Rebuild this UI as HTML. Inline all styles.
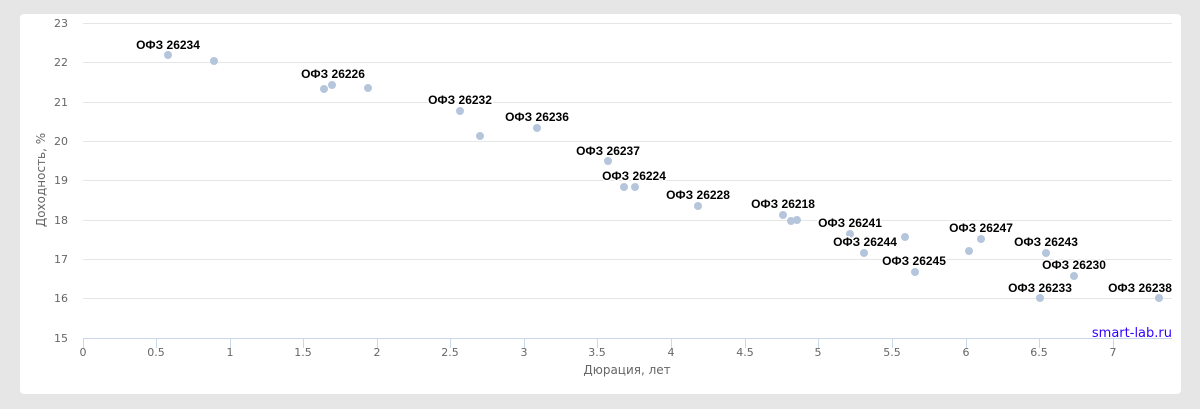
<!DOCTYPE html>
<html><head><meta charset="utf-8"><style>
body{margin:0;background:#e6e6e6;width:1200px;height:409px;overflow:hidden;font-family:"Liberation Sans",sans-serif}
.card{position:absolute;left:20px;top:14px;width:1161px;height:380px;background:#fff;border-radius:4px}
svg{position:absolute;left:0;top:0}
.lbl{font:bold 12px "Liberation Sans","DejaVu Sans",sans-serif;fill:#000;stroke:#fff;stroke-width:3px;paint-order:stroke;text-anchor:middle}
.ax{font:11px "DejaVu Sans","Liberation Sans",sans-serif;fill:#666}
</style></head><body>
<div class="card"></div>
<svg width="1200" height="409">
<g stroke="#e6e6e6" stroke-width="1">
<line x1="83" x2="1172" y1="23.5" y2="23.5"/><line x1="83" x2="1172" y1="62.5" y2="62.5"/>
<line x1="83" x2="1172" y1="102.5" y2="102.5"/><line x1="83" x2="1172" y1="141.5" y2="141.5"/>
<line x1="83" x2="1172" y1="180.5" y2="180.5"/><line x1="83" x2="1172" y1="220.5" y2="220.5"/>
<line x1="83" x2="1172" y1="259.5" y2="259.5"/><line x1="83" x2="1172" y1="298.5" y2="298.5"/>
</g>
<line x1="83" x2="1172" y1="338.5" y2="338.5" stroke="#ccd6eb"/>
<g stroke="#ccd6eb">
<line x1="83.5" x2="83.5" y1="338" y2="348"/><line x1="156.5" x2="156.5" y1="338" y2="348"/><line x1="230.5" x2="230.5" y1="338" y2="348"/><line x1="377.5" x2="377.5" y1="338" y2="348"/><line x1="303.5" x2="303.5" y1="338" y2="348"/><line x1="450.5" x2="450.5" y1="338" y2="348"/><line x1="524.5" x2="524.5" y1="338" y2="348"/><line x1="597.5" x2="597.5" y1="338" y2="348"/><line x1="671.5" x2="671.5" y1="338" y2="348"/><line x1="745.5" x2="745.5" y1="338" y2="348"/><line x1="818.5" x2="818.5" y1="338" y2="348"/><line x1="892.5" x2="892.5" y1="338" y2="348"/><line x1="966.5" x2="966.5" y1="338" y2="348"/><line x1="1039.5" x2="1039.5" y1="338" y2="348"/><line x1="1113.5" x2="1113.5" y1="338" y2="348"/>
</g>
<g class="ax" text-anchor="end">
<text x="68" y="27">23</text><text x="68" y="66">22</text><text x="68" y="106">21</text><text x="68" y="145">20</text><text x="68" y="184">19</text><text x="68" y="224">18</text><text x="68" y="263">17</text><text x="68" y="302">16</text><text x="68" y="342">15</text>
</g>
<g class="ax" text-anchor="middle">
<text x="83" y="356">0</text><text x="156" y="356">0.5</text><text x="230" y="356">1</text><text x="303" y="356">1.5</text><text x="377" y="356">2</text><text x="450" y="356">2.5</text><text x="524" y="356">3</text><text x="597" y="356">3.5</text><text x="671" y="356">4</text><text x="745" y="356">4.5</text><text x="818" y="356">5</text><text x="892" y="356">5.5</text><text x="966" y="356">6</text><text x="1039" y="356">6.5</text><text x="1113" y="356">7</text>
</g>
<text x="627" y="374" text-anchor="middle" style="font:12px 'DejaVu Sans',sans-serif;fill:#666">Дюрация, лет</text>
<text transform="translate(45,180) rotate(-90)" text-anchor="middle" style="font:12px 'DejaVu Sans',sans-serif;fill:#666">Доходность, %</text>
<text x="1172" y="337" text-anchor="end" style="font:13px 'DejaVu Sans',sans-serif;fill:#3300ff">smart-lab.ru</text>
<g fill="#b5c6dc">
<circle cx="168" cy="55" r="4"/><circle cx="214" cy="61" r="4"/><circle cx="324" cy="89" r="4"/><circle cx="332" cy="85" r="4"/><circle cx="368" cy="88" r="4"/><circle cx="460" cy="111" r="4"/><circle cx="480" cy="136" r="4"/><circle cx="537" cy="128" r="4"/><circle cx="608" cy="161" r="4"/><circle cx="624" cy="187" r="4"/><circle cx="635" cy="187" r="4"/><circle cx="698" cy="206" r="4"/><circle cx="783" cy="215" r="4"/><circle cx="791" cy="221" r="4"/><circle cx="797" cy="220" r="4"/><circle cx="850" cy="234" r="4"/><circle cx="864" cy="253" r="4"/><circle cx="905" cy="237" r="4"/><circle cx="915" cy="272" r="4"/><circle cx="969" cy="251" r="4"/><circle cx="981" cy="239" r="4"/><circle cx="1046" cy="253" r="4"/><circle cx="1040" cy="298" r="4"/><circle cx="1074" cy="276" r="4"/><circle cx="1159" cy="298" r="4"/>
</g>
<text class="lbl" x="168" y="49">ОФЗ 26234</text>
<text class="lbl" x="333" y="78">ОФЗ 26226</text>
<text class="lbl" x="460" y="104">ОФЗ 26232</text>
<text class="lbl" x="537" y="121">ОФЗ 26236</text>
<text class="lbl" x="608" y="155">ОФЗ 26237</text>
<text class="lbl" x="634" y="180">ОФЗ 26224</text>
<text class="lbl" x="698" y="199">ОФЗ 26228</text>
<text class="lbl" x="783" y="208">ОФЗ 26218</text>
<text class="lbl" x="850" y="227">ОФЗ 26241</text>
<text class="lbl" x="865" y="246">ОФЗ 26244</text>
<text class="lbl" x="914" y="265">ОФЗ 26245</text>
<text class="lbl" x="981" y="232">ОФЗ 26247</text>
<text class="lbl" x="1046" y="246">ОФЗ 26243</text>
<text class="lbl" x="1074" y="269">ОФЗ 26230</text>
<text class="lbl" x="1040" y="292">ОФЗ 26233</text>
<text class="lbl" x="1140" y="292">ОФЗ 26238</text>
</svg>
</body></html>
